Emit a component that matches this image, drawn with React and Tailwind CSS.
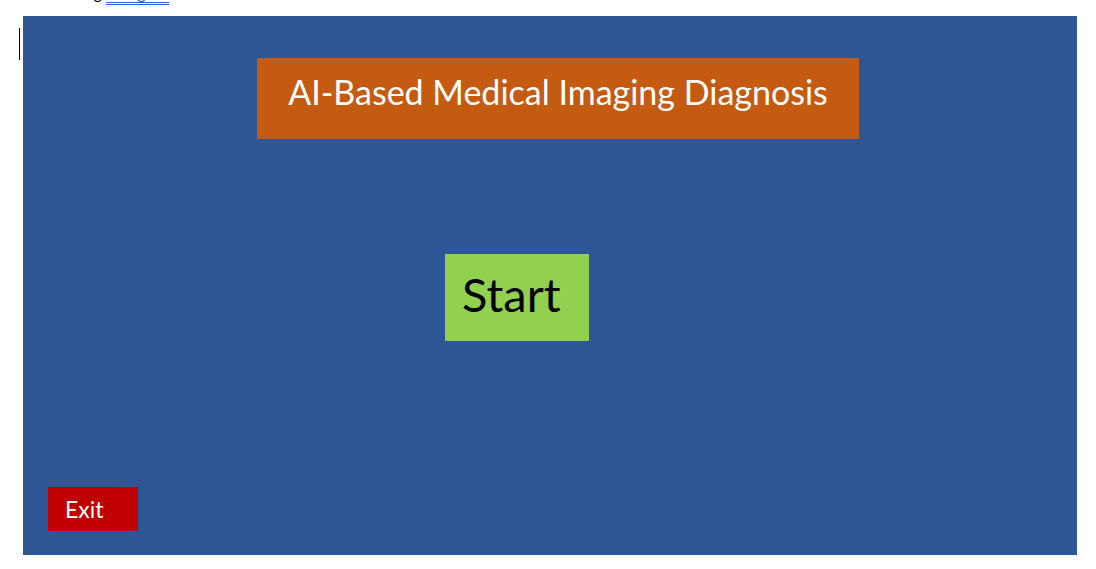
export default function App() {
  const font = { fontFamily: '"Lato", "Open Sans", sans-serif' };
  return (
    <div className="w-[1096px] h-[569px] bg-white overflow-hidden relative" style={font}>
      <div className="h-[16px] overflow-hidden">
        <div className="mt-[-15px] ml-[65px] text-[16px] leading-[16px] text-black whitespace-nowrap">
          <span>using </span>
          <span className="text-[#1a56d6] border-b-[3px] border-double border-[#2a62d8] pr-[14px]">Design</span>
        </div>
      </div>
      <div className="absolute left-[19px] top-[28px] w-px h-[32px] bg-black" />
      <div className="ml-[23px] w-[1054px] h-[539px] bg-[#2e5594] flex flex-col">
        <div className="mt-[42px] ml-[234px] w-[602px] h-[81px] bg-[#c55a11] flex items-start justify-center pt-[17px]">
          <span className="text-white text-[34px] leading-none whitespace-nowrap">AI-Based Medical Imaging Diagnosis</span>
        </div>
        <div className="mt-[115px] ml-[422px] w-[144px] h-[87px] bg-[#92d050] flex items-start pl-[17px] pt-[17px]">
          <span className="text-black text-[47px] leading-none">Start</span>
        </div>
        <div className="mt-auto mb-[24px] ml-[25px] w-[90px] h-[44px] bg-[#c00000] flex items-start pl-[17px] pt-[11px]">
          <span className="text-white text-[23px] leading-none">Exit</span>
        </div>
      </div>
    </div>
  );
}
